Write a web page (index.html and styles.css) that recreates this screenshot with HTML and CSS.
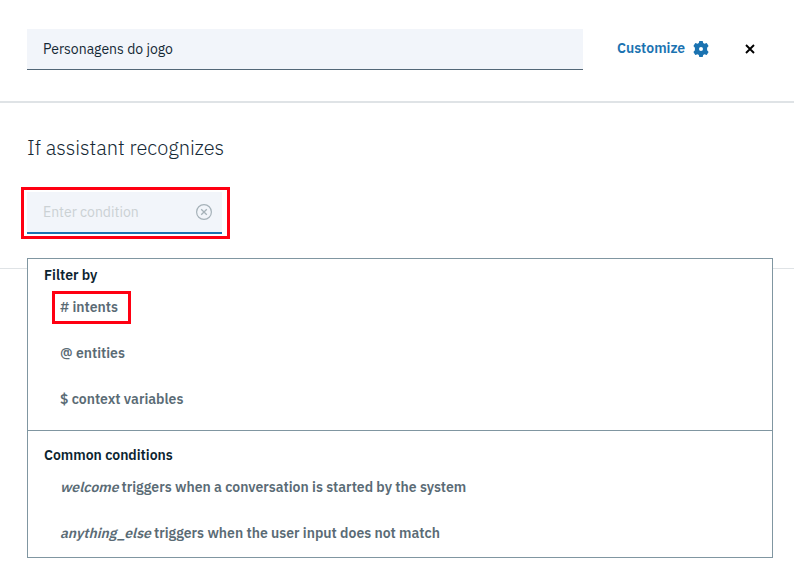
FILE: index.html
```
<!DOCTYPE html>
<html lang="pt">
<head>
<meta charset="utf-8">
<title>Personagens do jogo</title>
<link rel="stylesheet" href="styles.css">
</head>
<body>
<header class="node-header">
  <div class="node-name">Personagens do jogo</div>
  <div class="customize">
    <span>Customize</span>
    <svg class="gear" viewBox="0 0 16 16" width="16" height="16"><path fill="currentColor" fill-rule="evenodd" d="M6.300 0h3.400l.5 2.100 1.200.7 2.300-.7 1.900 3-1.500 1.600v2.600l1.500 1.600-1.900 3-2.300-.7-1.200.7-.5 2.100H6.300l-.5-2.100-1.200-.7-2.300.7-1.900-3 1.500-1.600V6.700L.4 5.100l1.900-3 2.300.7 1.200-.7zM8 6a2 2 0 1 0 0 4 2 2 0 0 0 0-4z"/></svg>
  </div>
  <svg class="close" viewBox="0 0 10 10" width="10" height="10"><path d="M1 1l8 8M9 1L1 9" stroke="currentColor" stroke-width="1.9"/></svg>
</header>
<section class="condition">
  <h1>If assistant recognizes</h1>
  <div class="condition-row">
    <div class="condition-input">
      <span>Enter condition</span>
      <svg viewBox="0 0 16 16" width="16" height="16" fill="none" stroke="currentColor"><circle cx="8" cy="8" r="7.400" stroke-width="1.200"/><path d="M5.200 5.200l5.600 5.600M10.800 5.200l-5.600 5.600" stroke-width="1.300"/></svg>
    </div>
    <div class="mark mark-input"></div>
  </div>
  <div class="menu">
    <div class="group filters">
      <h2>Filter by</h2>
      <div class="option"># intents<div class="mark mark-option"></div></div>
      <div class="option">@ entities</div>
      <div class="option">$ context variables</div>
    </div>
    <div class="group common">
      <h2>Common conditions</h2>
      <div class="option"><em>welcome</em><span>triggers when a conversation is started by the system</span></div>
      <div class="option"><em>anything_else</em><span>triggers when the user input does not match</span></div>
    </div>
  </div>
</section>
</body>
</html>
```
FILE: styles.css
```
* { box-sizing: border-box; }
body {
  margin: 0;
  height: 570px;
  overflow: hidden;
  background: #fff;
  color: #152935;
  font: 14px/20px "IBM Plex Sans", Roboto, sans-serif;
  white-space: nowrap;
}
svg { display: block; flex: none; }
h1, h2 { margin: 0; }
.node-header {
  display: flex;
  height: 103px;
  padding: 29px 0 0 27px;
  border-bottom: 2px solid #dfe3e6;
}
.node-name {
  width: 556px;
  height: 41px;
  padding: 10px 16px;
  background: #f2f5fa;
  border-bottom: 1px solid #536777;
}
.customize {
  display: flex;
  width: 92px;
  margin: 9px 0 0 34px;
  justify-content: space-between;
  color: #1b73b1;
  font-weight: 600;
}
.gear { margin-top: 3px; }
.close { margin: 15px 0 0 36px; color: #000; }
.condition {
  position: relative;
  height: 166px;
  padding: 31px 27px 0;
  border-bottom: 1px solid #dfe3e6;
}
h1 { font-size: 20px; line-height: 28px; font-weight: 300; }
.condition-row { position: relative; width: 195px; margin-top: 30px; }
.condition-input {
  display: flex;
  align-items: center;
  justify-content: space-between;
  height: 42px;
  padding: 0 10px 0 16px;
  background: #f2f5fa;
  border-bottom: 2px solid #1b73b1;
  color: #cbd1d4;
}
.condition-input svg { color: #a6b2b9; }
.mark { position: absolute; border: 3px solid #ff0012; }
.mark-input { inset: -5px -8px -5px -6px; }
.menu {
  position: absolute;
  top: 155px;
  left: 27px;
  width: 746px;
  height: 300px;
  border: 1px solid #8096a1;
  background: #fff;
}
.group { padding: 6px 16px 0; }
.filters { height: 172px; border-bottom: 1px solid #8096a1; }
.common { padding-top: 14px; }
h2 { font-size: 14px; line-height: 20px; font-weight: 600; color: #0c2430; }
.option {
  position: relative;
  display: flex;
  gap: 3px;
  height: 46px;
  padding: 12px 16px 0;
  color: #5a6b75;
  font-weight: 600;
}
.option em {
  font-style: normal;
  line-height: 20px;
  height: 20px;
  transform: skewX(-14deg);
  transform-origin: 0 15px;
}
.mark-option { left: 8px; top: 6px; width: 79px; height: 33px; }
```
